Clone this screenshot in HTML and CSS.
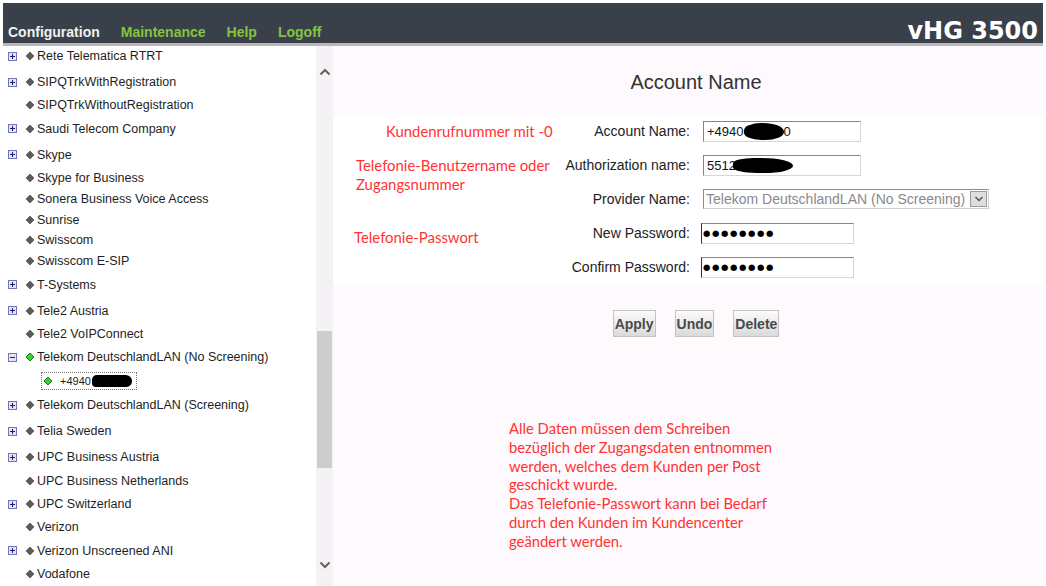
FILE: index.html
```html
<!DOCTYPE html>
<html lang="de">
<head>
<meta charset="utf-8">
<title>vHG 3500 - Account Name</title>
<link rel="stylesheet" href="styles.css">
</head>
<body>
<div class="page">
  <header class="topbar">
    <nav class="menu">
      <span class="menu-item current">Configuration</span>
      <span class="menu-item">Maintenance</span>
      <span class="menu-item">Help</span>
      <span class="menu-item">Logoff</span>
    </nav>
    <div class="brand">vHG 3500</div>
  </header>

  <div class="main">
    <aside class="tree-pane">
      <ul class="tree">
        <li class="node exp"><svg class="toggle" viewBox="0 0 9 9"><rect x="0.5" y="0.5" width="8" height="8" fill="#e4e4f6" stroke="#7474b8"/><path d="M2 4.5h5M4.5 2v5" stroke="#1c1c70"/></svg><svg class="dia" viewBox="0 0 10 10"><path d="M5 1L9 5L5 9L1 5Z"/></svg><span class="lbl">Rete Telematica RTRT</span></li>
        <li class="node exp"><svg class="toggle" viewBox="0 0 9 9"><rect x="0.5" y="0.5" width="8" height="8" fill="#e4e4f6" stroke="#7474b8"/><path d="M2 4.5h5M4.5 2v5" stroke="#1c1c70"/></svg><svg class="dia" viewBox="0 0 10 10"><path d="M5 1L9 5L5 9L1 5Z"/></svg><span class="lbl">SIPQTrkWithRegistration</span></li>
        <li class="node"><span class="slot"></span><svg class="dia" viewBox="0 0 10 10"><path d="M5 1L9 5L5 9L1 5Z"/></svg><span class="lbl">SIPQTrkWithoutRegistration</span></li>
        <li class="node exp"><svg class="toggle" viewBox="0 0 9 9"><rect x="0.5" y="0.5" width="8" height="8" fill="#e4e4f6" stroke="#7474b8"/><path d="M2 4.5h5M4.5 2v5" stroke="#1c1c70"/></svg><svg class="dia" viewBox="0 0 10 10"><path d="M5 1L9 5L5 9L1 5Z"/></svg><span class="lbl">Saudi Telecom Company</span></li>
        <li class="node exp"><svg class="toggle" viewBox="0 0 9 9"><rect x="0.5" y="0.5" width="8" height="8" fill="#e4e4f6" stroke="#7474b8"/><path d="M2 4.5h5M4.5 2v5" stroke="#1c1c70"/></svg><svg class="dia" viewBox="0 0 10 10"><path d="M5 1L9 5L5 9L1 5Z"/></svg><span class="lbl">Skype</span></li>
        <li class="node"><span class="slot"></span><svg class="dia" viewBox="0 0 10 10"><path d="M5 1L9 5L5 9L1 5Z"/></svg><span class="lbl">Skype for Business</span></li>
        <li class="node"><span class="slot"></span><svg class="dia" viewBox="0 0 10 10"><path d="M5 1L9 5L5 9L1 5Z"/></svg><span class="lbl">Sonera Business Voice Access</span></li>
        <li class="node"><span class="slot"></span><svg class="dia" viewBox="0 0 10 10"><path d="M5 1L9 5L5 9L1 5Z"/></svg><span class="lbl">Sunrise</span></li>
        <li class="node"><span class="slot"></span><svg class="dia" viewBox="0 0 10 10"><path d="M5 1L9 5L5 9L1 5Z"/></svg><span class="lbl">Swisscom</span></li>
        <li class="node"><span class="slot"></span><svg class="dia" viewBox="0 0 10 10"><path d="M5 1L9 5L5 9L1 5Z"/></svg><span class="lbl">Swisscom E-SIP</span></li>
        <li class="node exp"><svg class="toggle" viewBox="0 0 9 9"><rect x="0.5" y="0.5" width="8" height="8" fill="#e4e4f6" stroke="#7474b8"/><path d="M2 4.5h5M4.5 2v5" stroke="#1c1c70"/></svg><svg class="dia" viewBox="0 0 10 10"><path d="M5 1L9 5L5 9L1 5Z"/></svg><span class="lbl">T-Systems</span></li>
        <li class="node exp"><svg class="toggle" viewBox="0 0 9 9"><rect x="0.5" y="0.5" width="8" height="8" fill="#e4e4f6" stroke="#7474b8"/><path d="M2 4.5h5M4.5 2v5" stroke="#1c1c70"/></svg><svg class="dia" viewBox="0 0 10 10"><path d="M5 1L9 5L5 9L1 5Z"/></svg><span class="lbl">Tele2 Austria</span></li>
        <li class="node"><span class="slot"></span><svg class="dia" viewBox="0 0 10 10"><path d="M5 1L9 5L5 9L1 5Z"/></svg><span class="lbl">Tele2 VoIPConnect</span></li>
        <li class="node exp"><svg class="toggle" viewBox="0 0 9 9"><rect x="0.5" y="0.5" width="8" height="8" fill="#e4e4f6" stroke="#7474b8"/><path d="M2 4.5h5" stroke="#1c1c70"/></svg><svg class="dia on" viewBox="0 0 10 10"><path d="M5 1L9 5L5 9L1 5Z"/></svg><span class="lbl">Telekom DeutschlandLAN (No Screening)</span></li>
        <li class="node child"><span class="sel-box"><svg class="dia on" viewBox="0 0 10 10"><path d="M5 1L9 5L5 9L1 5Z"/></svg><span class="lbl">+4940</span><span class="redact redact-tree"></span></span></li>
        <li class="node exp"><svg class="toggle" viewBox="0 0 9 9"><rect x="0.5" y="0.5" width="8" height="8" fill="#e4e4f6" stroke="#7474b8"/><path d="M2 4.5h5M4.5 2v5" stroke="#1c1c70"/></svg><svg class="dia" viewBox="0 0 10 10"><path d="M5 1L9 5L5 9L1 5Z"/></svg><span class="lbl">Telekom DeutschlandLAN (Screening)</span></li>
        <li class="node exp"><svg class="toggle" viewBox="0 0 9 9"><rect x="0.5" y="0.5" width="8" height="8" fill="#e4e4f6" stroke="#7474b8"/><path d="M2 4.5h5M4.5 2v5" stroke="#1c1c70"/></svg><svg class="dia" viewBox="0 0 10 10"><path d="M5 1L9 5L5 9L1 5Z"/></svg><span class="lbl">Telia Sweden</span></li>
        <li class="node exp"><svg class="toggle" viewBox="0 0 9 9"><rect x="0.5" y="0.5" width="8" height="8" fill="#e4e4f6" stroke="#7474b8"/><path d="M2 4.5h5M4.5 2v5" stroke="#1c1c70"/></svg><svg class="dia" viewBox="0 0 10 10"><path d="M5 1L9 5L5 9L1 5Z"/></svg><span class="lbl">UPC Business Austria</span></li>
        <li class="node"><span class="slot"></span><svg class="dia" viewBox="0 0 10 10"><path d="M5 1L9 5L5 9L1 5Z"/></svg><span class="lbl">UPC Business Netherlands</span></li>
        <li class="node exp"><svg class="toggle" viewBox="0 0 9 9"><rect x="0.5" y="0.5" width="8" height="8" fill="#e4e4f6" stroke="#7474b8"/><path d="M2 4.5h5M4.5 2v5" stroke="#1c1c70"/></svg><svg class="dia" viewBox="0 0 10 10"><path d="M5 1L9 5L5 9L1 5Z"/></svg><span class="lbl">UPC Switzerland</span></li>
        <li class="node"><span class="slot"></span><svg class="dia" viewBox="0 0 10 10"><path d="M5 1L9 5L5 9L1 5Z"/></svg><span class="lbl">Verizon</span></li>
        <li class="node exp"><svg class="toggle" viewBox="0 0 9 9"><rect x="0.5" y="0.5" width="8" height="8" fill="#e4e4f6" stroke="#7474b8"/><path d="M2 4.5h5M4.5 2v5" stroke="#1c1c70"/></svg><svg class="dia" viewBox="0 0 10 10"><path d="M5 1L9 5L5 9L1 5Z"/></svg><span class="lbl">Verizon Unscreened ANI</span></li>
        <li class="node"><span class="slot"></span><svg class="dia" viewBox="0 0 10 10"><path d="M5 1L9 5L5 9L1 5Z"/></svg><span class="lbl">Vodafone</span></li>
      </ul>
    </aside>

    <div class="scrollbar">
      <svg class="sb-arrow" viewBox="0 0 12 8"><path d="M1.5 6.5L6 2L10.5 6.5"/></svg>
      <div class="sb-track"><div class="sb-thumb"></div></div>
      <svg class="sb-arrow" viewBox="0 0 12 8"><path d="M1.5 1.5L6 6L10.5 1.5"/></svg>
    </div>

    <section class="content">
      <h1 class="panel-title">Account Name</h1>

      <div class="form-band">
        <div class="note note-r1">Kundenrufnummer mit -0</div>
        <div class="label">Account Name:</div>
        <div class="field"><div class="input"><span class="val">+4940</span><span class="redact redact-a"></span><span class="val">0</span></div></div>

        <div class="note note-r2">Telefonie-Benutzername oder<br>Zugangsnummer</div>
        <div class="label">Authorization name:</div>
        <div class="field"><div class="input"><span class="val">5512</span><span class="redact redact-b"></span></div></div>

        <div class="label">Provider Name:</div>
        <div class="field"><div class="select"><span class="select-text">Telekom DeutschlandLAN (No Screening)</span><span class="select-btn"><svg viewBox="0 0 10 8"><path d="M1.5 2L5 5.5L8.5 2"/></svg></span></div></div>

        <div class="note note-r4">Telefonie-Passwort</div>
        <div class="label">New Password:</div>
        <div class="field"><div class="input pw"><span class="dots">●●●●●●●●</span></div></div>

        <div class="note"></div>
        <div class="label">Confirm Password:</div>
        <div class="field"><div class="input pw"><span class="dots">●●●●●●●●</span></div></div>
      </div>

      <div class="actions">
        <button class="btn">Apply</button>
        <button class="btn">Undo</button>
        <button class="btn">Delete</button>
      </div>

      <p class="hint">Alle Daten müssen dem Schreiben<br>bezüglich der Zugangsdaten entnommen<br>werden, welches dem Kunden per Post<br>geschickt wurde.<br>Das Telefonie-Passwort kann bei Bedarf<br>durch den Kunden im Kundencenter<br>geändert werden.</p>
    </section>
  </div>
</div>
</body>
</html>
```

FILE: styles.css
```css
* { box-sizing: border-box; }
html, body { margin: 0; padding: 0; }
body {
  background: #fff;
  font-family: "Liberation Sans", Arial, sans-serif;
  color: #222;
  overflow: hidden;
}
.page {
  height: 586px;
  padding: 3px 3px 0 3px;
  display: flex;
  flex-direction: column;
}

/* Header */
.topbar {
  flex: none;
  height: 43px;
  background: #3a4049;
  border-bottom: 3px solid #b8b8ba;
  display: flex;
  align-items: flex-end;
  justify-content: space-between;
  padding: 0 5px 0 5px;
}
.menu {
  display: flex;
  gap: 21px;
  padding-bottom: 3px;
}
.menu-item {
  font-weight: bold;
  font-size: 14px;
  line-height: 16px;
  color: #84c440;
}
.menu-item.current { color: #f0f0f0; }
.brand {
  font-family: "DejaVu Sans", sans-serif;
  font-weight: bold;
  font-size: 24px;
  line-height: 24px;
  color: #fff;
}

/* Main */
.main {
  flex: 1;
  min-height: 0;
  display: flex;
}
.tree-pane {
  width: 313px;
  flex: none;
  overflow: hidden;
  background: #fff;
}
.tree {
  list-style: none;
  margin: -3px 0 0 0;
  padding: 0;
  font-size: 12.5px;
  color: #1e1e1e;
}
.node {
  display: flex;
  align-items: center;
  height: 20.75px;
  padding-left: 5px;
  white-space: nowrap;
}
.node.exp { height: 26px; }
.node.child { height: 22px; padding-left: 38px; }
.toggle, .slot {
  width: 9px;
  height: 9px;
  flex: none;
  display: block;
}
.dia {
  width: 10px;
  height: 10px;
  margin-left: 8px;
  flex: none;
  display: block;
  fill: #5c5c5c;
  stroke: #5c5c5c;
  stroke-width: 0.8;
  stroke-linejoin: round;
}
.dia.on { fill: #35d135; stroke: #1c7a1c; stroke-width: 1; }
.lbl { margin-left: 2px; }
.sel-box {
  display: flex;
  align-items: center;
  height: 18px;
  border: 1px dotted #777;
  padding: 0 4px 0 1px;
}
.sel-box .dia { margin-left: 0; }
.sel-box .lbl { margin-left: 7px; font-size: 11px; }

.redact {
  display: inline-block;
  background: #000;
  border-radius: 50% / 50%;
}
.redact-tree { width: 40px; height: 12px; margin-left: 1px; border-radius: 6px 8px 7px 5px; }

/* Scrollbar */
.scrollbar {
  width: 17px;
  flex: none;
  background: #f4f2f4;
  display: flex;
  flex-direction: column;
  align-items: center;
  padding: 22px 0 17px;
}
.sb-arrow {
  width: 12px;
  height: 8px;
  flex: none;
  fill: none;
  stroke: #606060;
  stroke-width: 2;
}
.sb-track {
  flex: 1;
  width: 100%;
  padding: 0 1px;
}
.sb-thumb {
  margin-top: 255px;
  height: 137px;
  background: #cdcdcd;
}

/* Content */
.content {
  flex: 1;
  background: #fdf9fc;
}
.panel-title {
  margin: 0;
  padding: 24px 0 0 16px;
  text-align: center;
  font-weight: normal;
  font-size: 20px;
  line-height: 24px;
  color: #333;
}
.form-band {
  margin-top: 22px;
  background: #fff;
  display: grid;
  grid-template-columns: 201px 148px 1fr;
  grid-auto-rows: 30px;
  row-gap: 4px;
  padding: 0 0 3px 21px;
}
.note {
  font-family: Lato, "Open Sans", sans-serif;
  font-size: 14.9px;
  line-height: 19px;
  color: #ff3333;
  white-space: nowrap;
  align-self: start;
}
.note-r1 { padding: 6px 0 0 32px; }
.note-r2 { grid-row: span 2; padding-top: 6px; padding-left: 2px; }
.note-r4 { padding-top: 10px; }
.label {
  font-size: 14px;
  color: #222;
  text-align: right;
  padding-right: 13px;
  align-self: center;
  white-space: nowrap;
}
.field {
  display: flex;
  align-items: center;
}
.input {
  width: 158px;
  height: 21px;
  background: #fff;
  border: 1px solid;
  border-color: #858585 #d6d6d6 #d6d6d6 #858585;
  display: flex;
  align-items: center;
  padding-left: 3px;
  font-size: 13px;
  color: #111;
}
.input.pw { width: 153px; margin-left: -2px; padding-left: 1px; border-left-color: #333; }
.redact-a { width: 40px; height: 17px; border-radius: 45% 55% 50% 45%; }
.redact-b { width: 60px; height: 15px; margin-left: -3px; border-radius: 40% 60% 55% 45%; }
.dots {
  font-family: "DejaVu Sans", sans-serif;
  font-size: 8.5px;
  letter-spacing: 1.6px;
  color: #000;
}
.select {
  width: 286px;
  height: 20px;
  background: #fff;
  border: 1px solid;
  border-color: #8a8a8a #d0d0d0 #d0d0d0 #8a8a8a;
  display: flex;
  align-items: center;
  justify-content: space-between;
  padding: 0 1px 0 2px;
}
.select-text {
  font-size: 14px;
  color: #8a8a8a;
  white-space: nowrap;
}
.select-btn {
  width: 17px;
  height: 16px;
  border: 1px solid #9a9a9a;
  background: #dedede;
  display: flex;
  align-items: center;
  justify-content: center;
}
.select-btn svg {
  width: 10px;
  height: 8px;
  fill: none;
  stroke: #555;
  stroke-width: 1.5;
}

/* Buttons */
.actions {
  display: flex;
  justify-content: center;
  gap: 19px;
  margin-top: 25px;
  padding-left: 16px;
}
.btn {
  height: 27px;
  padding: 0 1px;
  border: 1px solid #c2c2c2;
  background: linear-gradient(#fbfbfb, #dadada);
  font-family: "Liberation Sans", Arial, sans-serif;
  font-weight: bold;
  font-size: 14px;
  color: #4a4a4a;
  border-radius: 0;
}

/* Hint */
.hint {
  margin: 82px 0 0 176px;
  font-family: Lato, "Open Sans", sans-serif;
  font-size: 14.8px;
  line-height: 18.8px;
  color: #ff3333;
  white-space: nowrap;
}
```
